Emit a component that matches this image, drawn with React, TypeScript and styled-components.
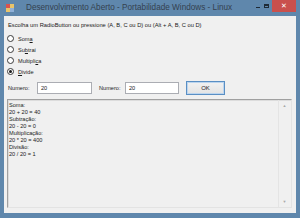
import styled, { createGlobalStyle } from "styled-components";

const GlobalStyle = createGlobalStyle`
  html, body {
    margin: 0;
    padding: 0;
    background: #5f86aa;
  }
  body {
    font-family: "Liberation Sans", Arial, sans-serif;
  }
`;

const Window = styled.div`
  width: 300px;
  height: 218px;
  box-sizing: border-box;
  display: flex;
  flex-direction: column;
  background: #5f87ac;
  padding: 0 4px 5px 4px;
`;

const TitleBar = styled.div`
  height: 16px;
  display: flex;
  align-items: center;
`;

const AppIcon = styled.svg`
  width: 8px;
  height: 8px;
  margin-left: 2px;
`;

const Title = styled.div`
  flex: 1;
  margin-left: 12px;
  font-size: 8.2px;
  color: #34414f;
  white-space: nowrap;
  padding-bottom: 1px;
`;

const Controls = styled.div`
  display: flex;
  align-self: flex-start;
  align-items: center;
  height: 12px;
`;

const CtrlButton = styled.div<{ $close?: boolean }>`
  width: ${(p) => (p.$close ? "24px" : "8px")};
  height: 12px;
  display: flex;
  align-items: center;
  justify-content: center;
  background: ${(p) => (p.$close ? "#c9504d" : "transparent")};
  color: ${(p) => (p.$close ? "#ffffff" : "#1e2a36")};
  font-size: 7px;
  margin-left: ${(p) => (p.$close ? "2px" : "0")};
`;

const MinGlyph = styled.div`
  width: 4px;
  height: 1px;
  margin-top: 3px;
  background: #1e2a36;
`;

const MaxGlyph = styled.div`
  width: 5px;
  height: 4px;
  box-sizing: border-box;
  border: 1px solid #1e2a36;
  border-top-width: 2px;
`;

const Client = styled.div`
  flex: 1;
  background: #f0f0f0;
  display: flex;
  flex-direction: column;
  padding: 5px 4px 5px 3px;
  font-size: 5.6px;
  color: #1a1a1a;
`;

const Prompt = styled.div`
  margin-left: 1px;
  height: 8px;
  line-height: 8px;
  font-size: 5.75px;
  white-space: nowrap;
`;

const RadioGroup = styled.div`
  display: flex;
  flex-direction: column;
  margin-top: 4px;
`;

const RadioRow = styled.label`
  display: flex;
  align-items: center;
  height: 11px;
`;

const RadioCircle = styled.span<{ $checked?: boolean }>`
  width: 7px;
  height: 7px;
  box-sizing: border-box;
  border-radius: 50%;
  border: 1px solid #3a3a3a;
  background: #ffffff;
  display: flex;
  align-items: center;
  justify-content: center;
  &::after {
    content: "";
    width: 3px;
    height: 3px;
    border-radius: 50%;
    background: ${(p) => (p.$checked ? "#1a1a1a" : "transparent")};
  }
`;

const RadioText = styled.span`
  margin-left: 4px;
  u {
    text-decoration-thickness: 0.5px;
    text-underline-offset: 1px;
  }
`;

const NumberRow = styled.div`
  display: flex;
  align-items: center;
  height: 14px;
  margin-top: 4px;
  margin-left: 1px;
`;

const FieldLabel = styled.span<{ $w: number }>`
  width: ${(p) => p.$w}px;
`;

const NumberInput = styled.div<{ $w: number }>`
  width: ${(p) => p.$w}px;
  height: 12px;
  box-sizing: border-box;
  border: 1px solid #abadb3;
  background: #ffffff;
  display: flex;
  align-items: center;
  padding-left: 3px;
  margin-right: 7px;
`;

const OkButton = styled.div`
  width: 39px;
  height: 14px;
  box-sizing: border-box;
  border: 1px solid #5a8fc4;
  box-shadow: inset 0 0 0 1px #bcd5ee;
  background: linear-gradient(#f2f2f2, #e3e3e3);
  display: flex;
  align-items: center;
  justify-content: center;
  font-size: 6px;
`;

const ResultBox = styled.div`
  flex: 1;
  margin-top: 4px;
  display: flex;
  box-sizing: border-box;
  border: 1px solid #a0a0a0;
  border-right-color: #e3e3e3;
  border-bottom-color: #e3e3e3;
  box-shadow: inset 1px 1px 0 #dcdcdc;
  background: #f0f0f0;
`;

const ResultText = styled.div`
  flex: 1;
  padding: 2px 0 0 1px;
  line-height: 7px;
  color: #222;
`;

const ScrollBar = styled.div`
  width: 11px;
  display: flex;
  flex-direction: column;
  justify-content: space-between;
  align-items: center;
  border-left: 1px solid #e4e4e4;
  padding: 3px 0;
  margin-right: 1px;
  color: #a8a8a8;
  font-size: 4px;
`;

const radios = [
  { pre: "Som", key: "a", post: "", checked: false },
  { pre: "Su", key: "b", post: "trai", checked: false },
  { pre: "Multipli", key: "c", post: "a", checked: false },
  { pre: "", key: "D", post: "ivide", checked: true },
];

const results = [
  "Soma:",
  "20 + 20 = 40",
  "Subtração:",
  "20 - 20 = 0",
  "Multiplicação:",
  "20 * 20 = 400",
  "Divisão:",
  "20 / 20 = 1",
];

export default function App() {
  return (
    <>
      <GlobalStyle />
      <Window>
        <TitleBar>
          <AppIcon viewBox="0 0 8 8">
            <rect x="0" y="0" width="8" height="8" fill="#e9c46a" />
            <rect x="0" y="0" width="4" height="4" fill="#d9534f" />
            <rect x="4" y="4" width="4" height="4" fill="#8fb0d8" />
          </AppIcon>
          <Title>Desenvolvimento Aberto - Portabilidade Windows - Linux</Title>
          <Controls>
            <CtrlButton>
              <MinGlyph />
            </CtrlButton>
            <CtrlButton>
              <MaxGlyph />
            </CtrlButton>
            <CtrlButton $close>✕</CtrlButton>
          </Controls>
        </TitleBar>
        <Client>
          <Prompt>Escolha um RadioButton ou pressione (A, B, C ou D) ou (Alt + A, B, C ou D)</Prompt>
          <RadioGroup>
            {radios.map((r) => (
              <RadioRow key={r.key}>
                <RadioCircle $checked={r.checked} />
                <RadioText>
                  {r.pre}
                  <u>{r.key}</u>
                  {r.post}
                </RadioText>
              </RadioRow>
            ))}
          </RadioGroup>
          <NumberRow>
            <FieldLabel $w={29}>Numero:</FieldLabel>
            <NumberInput $w={55}>20</NumberInput>
            <FieldLabel $w={26}>Numero:</FieldLabel>
            <NumberInput $w={54}>20</NumberInput>
            <OkButton>OK</OkButton>
          </NumberRow>
          <ResultBox>
            <ResultText>
              {results.map((line, i) => (
                <div key={i}>{line}</div>
              ))}
            </ResultText>
            <ScrollBar>
              <span>▲</span>
              <span>▼</span>
            </ScrollBar>
          </ResultBox>
        </Client>
      </Window>
    </>
  );
}
